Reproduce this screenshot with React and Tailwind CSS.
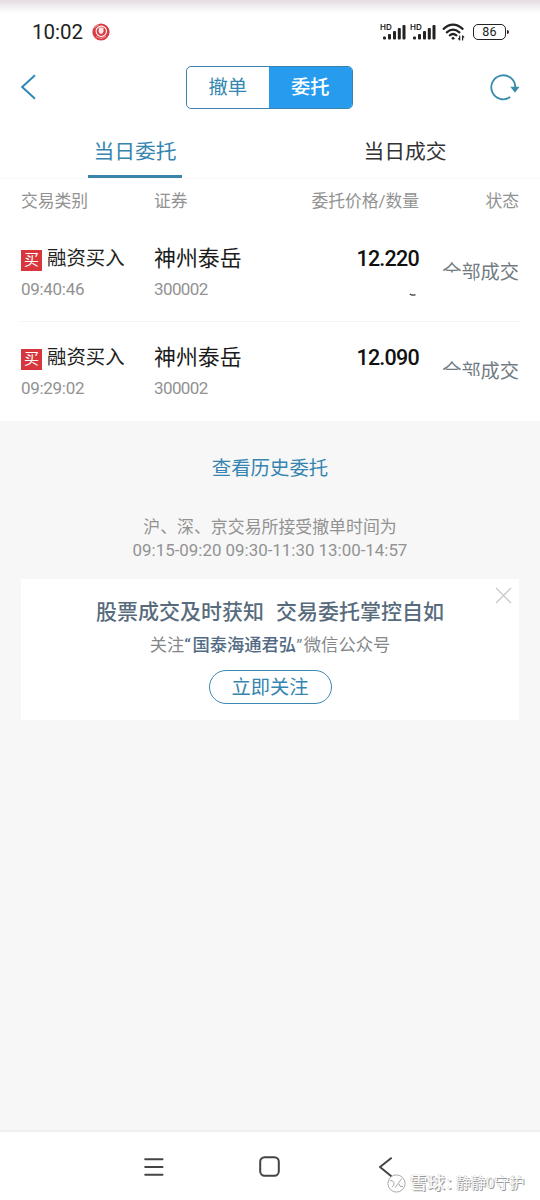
const orders = [
  { time: '09:40:46', type: '融资买入', name: '神州泰岳', code: '300002', price: '12.220', leftover: true },
  { time: '09:29:02', type: '融资买入', name: '神州泰岳', code: '300002', price: '12.090', leftover: false },
]

function Signal() {
  return (
    <div className="relative w-[26px] h-4 shrink-0">
      <span className="absolute -left-px -top-px text-[8px] leading-[8px] font-semibold font-['Inter',sans-serif]">HD</span>
      <svg className="absolute left-0 top-0" width="26" height="16" viewBox="0 0 26 16" fill="#222">
        <rect x="2" y="12.5" width="3" height="3" rx="1" />
        <rect x="7" y="10" width="3" height="5.5" rx="1" />
        <rect x="12" y="7" width="3" height="8.5" rx="1" />
        <rect x="16.8" y="4" width="3" height="11.5" rx="1" />
        <rect x="21.5" y="1" width="3" height="14.5" rx="1" />
      </svg>
    </div>
  )
}

function StatusBar() {
  return (
    <div className="h-16 pl-8 pr-[31px] flex items-center justify-between bg-linear-to-b from-[#e3dce2] via-white via-20% to-white text-[#222]">
      <div className="flex items-center">
        <span className="text-[20.5px] leading-6 w-[50px] font-['Roboto',sans-serif]">10:02</span>
        <svg className="ml-2.5" width="18" height="18" viewBox="0 0 18 18">
          <circle cx="9" cy="9" r="8.6" fill="#d93b42" />
          <circle cx="9.3" cy="8.3" r="5.2" fill="none" stroke="#fff" strokeWidth="1.1" />
          <path d="M7 4.5h4.5v4.2l-1.4 2H8l-1.4-2z" fill="#fbe9e5" />
          <path d="M4 13.5q5 3.6 10-.3M2 5.5q2-3 5-3.8" stroke="#f2a3a3" strokeWidth="1" fill="none" />
        </svg>
      </div>
      <div className="flex items-center">
        <Signal />
        <div className="w-1" />
        <Signal />
        <svg className="ml-[5px]" width="23" height="18" viewBox="0 0 23 18" fill="none" stroke="#222" strokeWidth="2.2" strokeLinecap="round">
          <path d="M1.6 5.8Q11 -2.4 20.6 5.8" />
          <path d="M4.8 9.4Q11 4 17.4 9.4" />
          <path d="M7.8 12.4Q11 9.6 14.4 12.4" />
          <circle cx="11" cy="15.3" r="1" fill="#222" strokeWidth="1" />
          <path d="M17.7 13v4M16.6 15.6l1.1 1.2M20.6 17v-4M20.6 13l1.1 1.2" strokeWidth="1.2" />
        </svg>
        <div className="ml-2 w-[33px] h-4 rounded-[5px] border-[1.5px] border-[#222] flex items-center justify-center text-[12.5px] leading-3 tracking-wide font-['Roboto',sans-serif]">86</div>
        <div className="ml-px w-0.5 h-1 rounded-r bg-[#222]" />
      </div>
    </div>
  )
}

function Header() {
  return (
    <div className="h-[46px] pl-5 pr-[20px] flex items-center justify-between">
      <svg width="18" height="26" viewBox="0 0 18 26" fill="none" stroke="#3187b5" strokeWidth="2">
        <path d="M15 1.3L2.2 13 15 24.7" />
      </svg>
      <div className="ml-[11px] w-[167px] h-[43px] flex rounded-[5px] border-[1.5px] border-[#3a83ad] overflow-hidden text-[19.3px]">
        <div className="flex-1 pt-[3px] flex items-center justify-center text-[#3586b3]">撤单</div>
        <div className="flex-1 pt-[3px] flex items-center justify-center bg-[#279cef] text-white font-medium">委托</div>
      </div>
      <svg width="31" height="28" viewBox="0 0 31 28" fill="none">
        <path d="M21.2 24.1A12 12 0 1 1 26.3 14" stroke="#3a8cab" strokeWidth="1.8" />
        <path d="M21.3 13.8h9.2l-4.5 6z" fill="#3a8cab" />
      </svg>
    </div>
  )
}

function Tabs() {
  return (
    <div className="h-[69px] flex text-[20.8px] border-b border-[#fafafa]">
      <div className="flex-1 flex flex-col items-center justify-between">
        <span className="mt-[26px] leading-8 text-[#3585b0]">当日委托</span>
        <span className="w-[94px] h-[3px] bg-[#3a85ab]" />
      </div>
      <div className="flex-1 flex flex-col items-center">
        <span className="mt-[26px] leading-8 text-[#333]">当日成交</span>
      </div>
    </div>
  )
}

function OrderRow({ order }) {
  return (
    <div className="h-[99px] pt-5 flex">
      <div className="w-[133px]">
        <div className="h-8 flex items-center">
          <span className="mt-0.5 w-[21px] h-[21px] bg-[#d8363d] text-white text-[15px] leading-[21px] text-center">买</span>
          <span className="ml-[5px] text-[19.4px] text-[#222] whitespace-nowrap">{order.type}</span>
        </div>
        <p className="mt-0.5 text-[17px] leading-6 tracking-[-0.3px] text-[#929292]">{order.time}</p>
      </div>
      <div className="w-[110px]">
        <p className="h-8 leading-8 text-[21.9px] text-[#1b1b1b] whitespace-nowrap">{order.name}</p>
        <p className="mt-0.5 text-[17px] leading-6 tracking-[-0.6px] text-[#929292]">{order.code}</p>
      </div>
      <div className="flex-1 flex flex-col items-end">
        <p className="h-8 leading-8 text-[21.5px] font-medium tracking-[-0.75px] text-[#111]">{order.price}</p>
        {order.leftover && (
          <svg className="mt-[18px] mr-0.5" width="8" height="4" viewBox="0 0 8 4" fill="none" stroke="#333" strokeWidth="1.3">
            <path d="M0.8 1L3 2.2 6.5 1.9" />
          </svg>
        )}
      </div>
      <div className="w-[100px] h-8 mt-[14px] relative text-right text-[19.2px] leading-8 text-[#727b82]">
        全部成交
        {/* white scribble over the lower half of the first two characters */}
        <svg className="absolute left-[20px] top-0" width="46" height="32" viewBox="0 0 46 32" fill="#fff">
          {order.leftover ? <path d="M0 15.5H20V18H27L29 22H35V24H41V32H0z" /> : <path d="M0 14H20V16H28L32 20H41V32H0z" />}
        </svg>
      </div>
    </div>
  )
}

function Promo() {
  return (
    <div className="relative mx-[21px] mt-[17px] h-[141px] bg-white flex flex-col items-center text-[#777]">
      <svg className="absolute right-[7px] top-2" width="17" height="17" viewBox="0 0 17 17" stroke="#c9c9c9" strokeWidth="1.3">
        <path d="M1 1l15 15M16 1L1 16" />
      </svg>
      <p className="mt-[17px] leading-8 text-[21px] font-medium text-[#586b7d] flex gap-3">
        <span>股票成交及时获知</span>
        <span>交易委托掌控自如</span>
      </p>
      <p className="mt-1 leading-[26px] text-[17.3px] text-[#85888b] whitespace-nowrap">
        关注<span className="font-medium text-[#526b84]"><span className="tracking-[1.5px]">“</span>国泰海通君弘</span><span className="tracking-[1.5px]">”</span>微信公众号
      </p>
      <div className="mt-3 w-[123px] h-[34px] pt-[3px] rounded-full border-[1.5px] border-[#3b88b0] flex items-center justify-center text-[19.3px] text-[#3585b0]">立即关注</div>
    </div>
  )
}

function NavBar() {
  return (
    <div className="relative h-[70px] border-t-2 border-[#f0f0f0] bg-white">
      <div className="flex h-[69px] items-center pl-[144px]">
        <svg width="20" height="20" viewBox="0 0 20 20" stroke="#444" strokeWidth="2" strokeLinecap="round">
          <path d="M1.2 2.2h17.3M1.2 10h17.3M1.2 17.8h17.3" />
        </svg>
        <svg className="ml-[95px]" width="21" height="21" viewBox="0 0 21 21" fill="none" stroke="#444" strokeWidth="2">
          <rect x="1.2" y="1.2" width="18.6" height="18.6" rx="4.5" />
        </svg>
        <svg className="ml-[98px]" width="15" height="20" viewBox="0 0 15 20" fill="none" stroke="#444" strokeWidth="2" strokeLinecap="round" strokeLinejoin="round">
          <path d="M13 1.2L2 10l11 9" />
        </svg>
      </div>
      <div className="absolute left-[387px] top-[41px] flex items-center text-[#fafafa] whitespace-nowrap [text-shadow:1px_1px_0_#999,-0.5px_-0.5px_0_#c4c4c4]">
        <svg width="19" height="19" viewBox="0 0 19 19" fill="none" stroke="#aaa" strokeWidth="1">
          <circle cx="9.5" cy="9.5" r="8.6" fill="#fff" />
          <path d="M3 6.5q3.2-.4 4 2.2T5 13M8.2 13.6L14.8 4.5M12 9.8q0 3.4 4 2.8" />
        </svg>
        <span className="ml-1 text-[17.5px] leading-5 w-[46px] font-medium">雪球<span className="ml-0.5">:</span></span>
        <span className="text-[15px] leading-5">静静0守护</span>
      </div>
    </div>
  )
}

export default function App() {
  return (
    <div className="w-[540px] h-[1200px] flex flex-col overflow-hidden bg-white font-['Roboto','Noto_Sans_CJK_SC',sans-serif]">
      <StatusBar />
      <Header />
      <Tabs />
      <div className="px-[21px]">
        <div className="h-11 pt-0.5 flex items-center text-[16.8px] text-[#929292]">
          <span className="w-[133px]">交易类别</span>
          <span className="w-[110px]">证券</span>
          <span className="flex-1 text-right whitespace-nowrap">委托价格/数量</span>
          <span className="w-[100px] text-right">状态</span>
        </div>
        <div className="divide-y divide-[#f3f3f3]">
          {orders.map(order => <OrderRow key={order.time} order={order} />)}
        </div>
      </div>
      <div className="flex-1 bg-[#f7f7f7]">
        <p className="mt-8 text-center text-[19.4px] leading-8 text-[#3585b0]">查看历史委托</p>
        <div className="mt-[31px] text-center text-[16.9px] leading-[23px] text-[#929292]">
          <p>沪、深、京交易所接受撤单时间为</p>
          <p>09:15-09:20 09:30-11:30 13:00-14:57</p>
        </div>
        <Promo />
      </div>
      <NavBar />
    </div>
  )
}
